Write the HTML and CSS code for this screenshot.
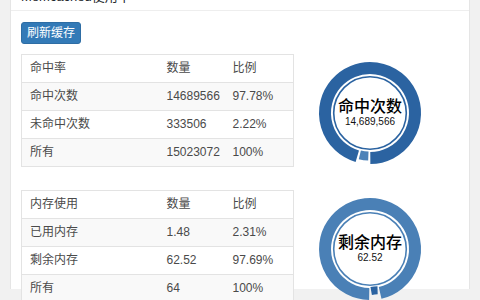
FILE: index.html
```
<!DOCTYPE html>
<html lang="zh">
<head>
<meta charset="utf-8">
<title>Memcached使用率</title>
<link rel="stylesheet" href="styles.css">
</head>
<body>
<div class="wrap">
  <div class="panel">
    <div class="panel-head">Memcached使用率</div>
    <div class="panel-body">
      <button class="btn" type="button">刷新缓存</button>

      <div class="stat-row">
        <table class="stat-table">
          <colgroup><col class="c1"><col class="c2"><col class="c3"></colgroup>
          <thead><tr><th>命中率</th><th>数量</th><th>比例</th></tr></thead>
          <tbody>
            <tr><td>命中次数</td><td>14689566</td><td>97.78%</td></tr>
            <tr><td>未命中次数</td><td>333506</td><td>2.22%</td></tr>
            <tr><td>所有</td><td>15023072</td><td>100%</td></tr>
          </tbody>
        </table>
        <div class="donut donut-dark">
          <svg width="110" height="110" viewBox="0 0 110 110">
            <circle class="inner" cx="55" cy="55" r="36.3"/>
            <path class="main" d="M42.30 98.17 A45 45 0 1 1 55.31 100.00"/>
            <path class="piece" d="M53.35 97.97 A43 43 0 0 1 44.82 96.78"/>
          </svg>
          <div class="label">
            <div class="title">命中次数</div>
            <div class="num">14,689,566</div>
          </div>
        </div>
      </div>

      <div class="stat-row">
        <table class="stat-table">
          <colgroup><col class="c1"><col class="c2"><col class="c3"></colgroup>
          <thead><tr><th>内存使用</th><th>数量</th><th>比例</th></tr></thead>
          <tbody>
            <tr><td>已用内存</td><td>1.48</td><td>2.31%</td></tr>
            <tr><td>剩余内存</td><td>62.52</td><td>97.69%</td></tr>
            <tr><td>所有</td><td>64</td><td>100%</td></tr>
          </tbody>
        </table>
        <div class="donut donut-light">
          <svg width="110" height="110" viewBox="0 0 110 110">
            <circle class="inner" cx="55" cy="55" r="36.3"/>
            <path class="main" d="M54.21 99.99 A45 45 0 1 1 65.12 98.85"/>
            <path class="piece" d="M62.58 96.31 A42 42 0 0 0 56.17 96.98" />
          </svg>
          <div class="label">
            <div class="title">剩余内存</div>
            <div class="num">62.52</div>
          </div>
        </div>
      </div>
    </div>
  </div>
</div>
</body>
</html>
```

FILE: styles.css
```
html, body {
  margin: 0;
  padding: 0;
  height: 100%;
  overflow: hidden;
  background: #f1f1f1;
  font-family: "Liberation Sans", "Noto Sans CJK SC", sans-serif;
  color: #444;
}

.wrap {
  padding: 0 10px;
  height: 100%;
}

.panel {
  background: #fff;
  border-left: 1px solid #e5e5e5;
  border-right: 1px solid #e5e5e5;
  height: 100%;
}

.panel-head {
  margin-top: -11px;
  padding: 0 10px 5px;
  font-size: 13px;
  line-height: 16px;
  color: #23282d;
  border-bottom: 1px solid #eeeeee;
}

.panel-body {
  padding: 11px 10px 0;
}

.btn {
  display: block;
  margin: 0;
  padding: 2px 5px;
  font-family: "Liberation Sans", "Noto Sans CJK SC", sans-serif;
  font-size: 12px;
  line-height: 16px;
  color: #fff;
  background: #337ab7;
  border: 1px solid #2e6da4;
  border-radius: 3px;
}

.stat-row {
  display: flex;
  align-items: flex-start;
  margin-top: 10px;
}

.stat-row + .stat-row {
  margin-top: 22px;
}

.stat-table {
  width: 272px;
  table-layout: fixed;
  border-collapse: collapse;
  border: 1px solid #e3e3e3;
  font-size: 12px;
  line-height: 13px;
  color: #4a4a4a;
}

.stat-table .c1 { width: 137px; }
.stat-table .c2 { width: 66px; }
.stat-table .c3 { width: 69px; }

.stat-table th,
.stat-table td {
  padding: 7px 8px;
  text-align: left;
  font-weight: normal;
  white-space: nowrap;
  border-top: 1px solid #e3e3e3;
}

.stat-table tbody tr:nth-child(odd) {
  background: #f9f9f9;
}

.donut {
  display: grid;
  margin-left: 21px;
  margin-top: 4px;
  width: 110px;
  height: 110px;
}

.donut svg,
.donut .label {
  grid-area: 1 / 1;
}

.donut svg path,
.donut svg circle {
  fill: none;
  stroke-linecap: butt;
}

.donut .main { stroke-width: 12; }
.donut .piece { stroke-width: 9; }
.donut .inner { stroke-width: 1.6; }

.donut-dark .main,
.donut-dark .inner { stroke: #2b63a1; }
.donut-dark .piece { stroke: #4d82b8; }

.donut-light .main,
.donut-light .inner { stroke: #4a80b6; }
.donut-light .piece { stroke: #2b63a1; stroke-width: 8; }

.donut .label {
  display: flex;
  flex-direction: column;
  align-items: center;
  justify-content: center;
  padding-bottom: 2px;
  color: #000;
}

.donut .title {
  font-family: "Noto Sans CJK SC", sans-serif;
  font-size: 16px;
  font-weight: 500;
  line-height: 18px;
}

.donut .num {
  font-family: "Liberation Sans", sans-serif;
  font-size: 10px;
  line-height: 15px;
  color: #111;
}
```
